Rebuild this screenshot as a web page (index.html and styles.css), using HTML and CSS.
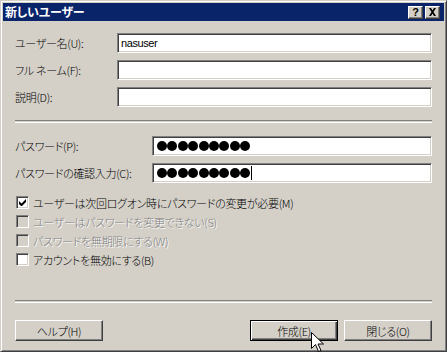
FILE: index.html
```html
<!DOCTYPE html>
<html lang="ja">
<head>
    <meta charset="UTF-8">
    <title>新しいユーザー</title>
    <link rel="stylesheet" href="styles.css">
</head>
<body>
    <div class="window">
        <div class="titlebar">
            <span class="title">新しいユーザー</span>
            <div class="caption-buttons">
                <span class="cap-btn help-glyph">?</span>
                <span class="cap-btn">
                    <svg width="9" height="8" viewBox="0 0 9 8">
                        <path d="M1 0h2l1.5 2.5L6 0h2L5.5 4 8 8H6L4.5 5.5 3 8H1l2.5-4z" fill="#000"/>
                    </svg>
                </span>
            </div>
        </div>

        <div class="client">
            <div class="fields">
                <div class="field-row">
                    <span class="label">ユーザー名(U):</span>
                    <div class="textbox"><span class="value">nasuser</span></div>
                </div>
                <div class="field-row">
                    <span class="label">フル ネーム(F):</span>
                    <div class="textbox"></div>
                </div>
                <div class="field-row">
                    <span class="label">説明(D):</span>
                    <div class="textbox"></div>
                </div>
            </div>

            <div class="separator sep-top"></div>

            <div class="fields password-fields">
                <div class="field-row">
                    <span class="label">パスワード(P):</span>
                    <div class="textbox">
                        <span class="dots">
                            <i></i><i></i><i></i><i></i><i></i><i></i><i></i><i></i><i></i>
                        </span>
                    </div>
                </div>
                <div class="field-row">
                    <span class="label">パスワードの確認入力(C):</span>
                    <div class="textbox">
                        <span class="dots">
                            <i></i><i></i><i></i><i></i><i></i><i></i><i></i><i></i><i></i>
                        </span>
                        <span class="caret"></span>
                    </div>
                </div>
            </div>

            <div class="options">
                <div class="option">
                    <span class="checkbox">
                        <svg width="7" height="7" viewBox="0 0 7 7">
                            <path d="M0 2v3l2 2h1l4-4V0L2.5 4.5z" fill="#000"/>
                        </svg>
                    </span>
                    <span>ユーザーは次回ログオン時にパスワードの変更が必要(M)</span>
                </div>
                <div class="option disabled">
                    <span class="checkbox"></span>
                    <span>ユーザーはパスワードを変更できない(S)</span>
                </div>
                <div class="option disabled">
                    <span class="checkbox"></span>
                    <span>パスワードを無期限にする(W)</span>
                </div>
                <div class="option">
                    <span class="checkbox"></span>
                    <span>アカウントを無効にする(B)</span>
                </div>
            </div>

            <div class="separator sep-bottom"></div>

            <div class="button-bar">
                <span class="button">ヘルプ(H)</span>
                <span class="spacer"></span>
                <span class="button default">作成(E)</span>
                <span class="button">閉じる(O)</span>
            </div>
        </div>

        <svg class="cursor" width="13" height="21" viewBox="0 0 13 21">
            <path d="M0.5 0.5v16l4-4 3 7 2.5-1-3-6.5h5.5z" fill="#fff" stroke="#000" stroke-width="1"/>
        </svg>
    </div>
</body>
</html>
```

FILE: styles.css
```css
body {
    margin: 0;
    padding: 0;
    background-color: #d4d0c8;
    font-family: "Noto Sans CJK JP", "Noto Sans", sans-serif;
    font-size: 11px;
    font-weight: 300;
    letter-spacing: -0.3px;
    color: #000;
}
.window {
    position: relative;
    width: 447px;
    height: 352px;
    box-sizing: border-box;
    background-color: #d4d0c8;
    border: 1px solid;
    border-color: #d4d0c8 #404040 #404040 #d4d0c8;
    box-shadow: inset 1px 1px #fff, inset -1px -1px #808080;
    padding: 2px;
    display: flex;
    flex-direction: column;
}
.titlebar {
    height: 18px;
    background-color: #0a246a;
    color: #fff;
    display: flex;
    align-items: center;
    padding: 0 4px 0 2px;
}
.title {
    flex: 1;
    font-weight: bold;
    font-size: 12px;
    letter-spacing: -0.2px;
    font-feature-settings: "palt";
    line-height: 18px;
}
.caption-buttons {
    display: flex;
    gap: 2px;
}
.cap-btn {
    width: 15px;
    height: 13px;
    box-sizing: border-box;
    background-color: #d4d0c8;
    border: 1px solid;
    border-color: #fff #404040 #404040 #fff;
    box-shadow: inset -1px -1px #808080;
    display: flex;
    align-items: center;
    justify-content: center;
    color: #000;
}
.help-glyph {
    font-family: "Liberation Sans", sans-serif;
    font-weight: bold;
    font-size: 11px;
    line-height: 11px;
    letter-spacing: 0;
}
.client {
    flex: 1;
    display: flex;
    flex-direction: column;
    padding: 12px 12px 0 12px;
}
.fields {
    display: flex;
    flex-direction: column;
    gap: 7px;
}
.field-row {
    display: flex;
    align-items: center;
    height: 20px;
}
.label {
    width: 102px;
    flex-shrink: 0;
    font-feature-settings: "palt";
    white-space: nowrap;
}
.password-fields .label {
    width: 137px;
}
.textbox {
    flex: 1;
    height: 20px;
    box-sizing: border-box;
    background-color: #fff;
    border: 1px solid;
    border-color: #808080 #fff #fff #808080;
    box-shadow: inset 1px 1px #404040, inset -1px -1px #d4d0c8;
    display: flex;
    align-items: center;
    padding-left: 3px;
}
.value {
    font-family: "Liberation Sans", sans-serif;
    font-weight: normal;
    font-size: 11px;
    letter-spacing: -0.4px;
}
.dots {
    display: flex;
    gap: 0.4px;
    padding-left: 1px;
}
.dots i {
    display: block;
    width: 10px;
    height: 10px;
    border-radius: 50%;
    background-color: #000;
}
.caret {
    width: 1px;
    height: 14px;
    background-color: #000;
    margin-left: 1px;
}
.separator {
    height: 1px;
    border-top: 1px solid #808080;
    border-bottom: 1px solid #fff;
}
.sep-top {
    margin: 13px 0 13px 0;
}
.options {
    margin-top: 10px;
    display: flex;
    flex-direction: column;
}
.option {
    height: 19px;
    display: flex;
    align-items: center;
    gap: 4px;
    padding-left: 1px;
    font-feature-settings: "palt";
    white-space: nowrap;
}
.checkbox {
    width: 13px;
    height: 13px;
    box-sizing: border-box;
    background-color: #fff;
    border: 1px solid;
    border-color: #808080 #fff #fff #808080;
    box-shadow: inset 1px 1px #404040, inset -1px -1px #d4d0c8;
    display: flex;
    align-items: center;
    justify-content: center;
}
.disabled {
    color: #808080;
    text-shadow: 1px 1px #fff;
}
.disabled .checkbox {
    background-color: #d4d0c8;
}
.sep-bottom {
    margin-top: 31px;
}
.button-bar {
    display: flex;
    gap: 6px;
    margin-top: 17px;
}
.spacer {
    flex: 1;
}
.button {
    width: 88px;
    height: 21px;
    box-sizing: border-box;
    background-color: #d4d0c8;
    border: 1px solid;
    border-color: #fff #404040 #404040 #fff;
    box-shadow: inset -1px -1px #808080;
    display: flex;
    align-items: center;
    justify-content: center;
    font-feature-settings: "palt";
}
.button.default {
    border-color: #000;
    box-shadow: inset 1px 1px #fff, inset -1px -1px #404040, inset -2px -2px #808080;
}
.cursor {
    position: absolute;
    left: 310px;
    top: 331px;
}
```
